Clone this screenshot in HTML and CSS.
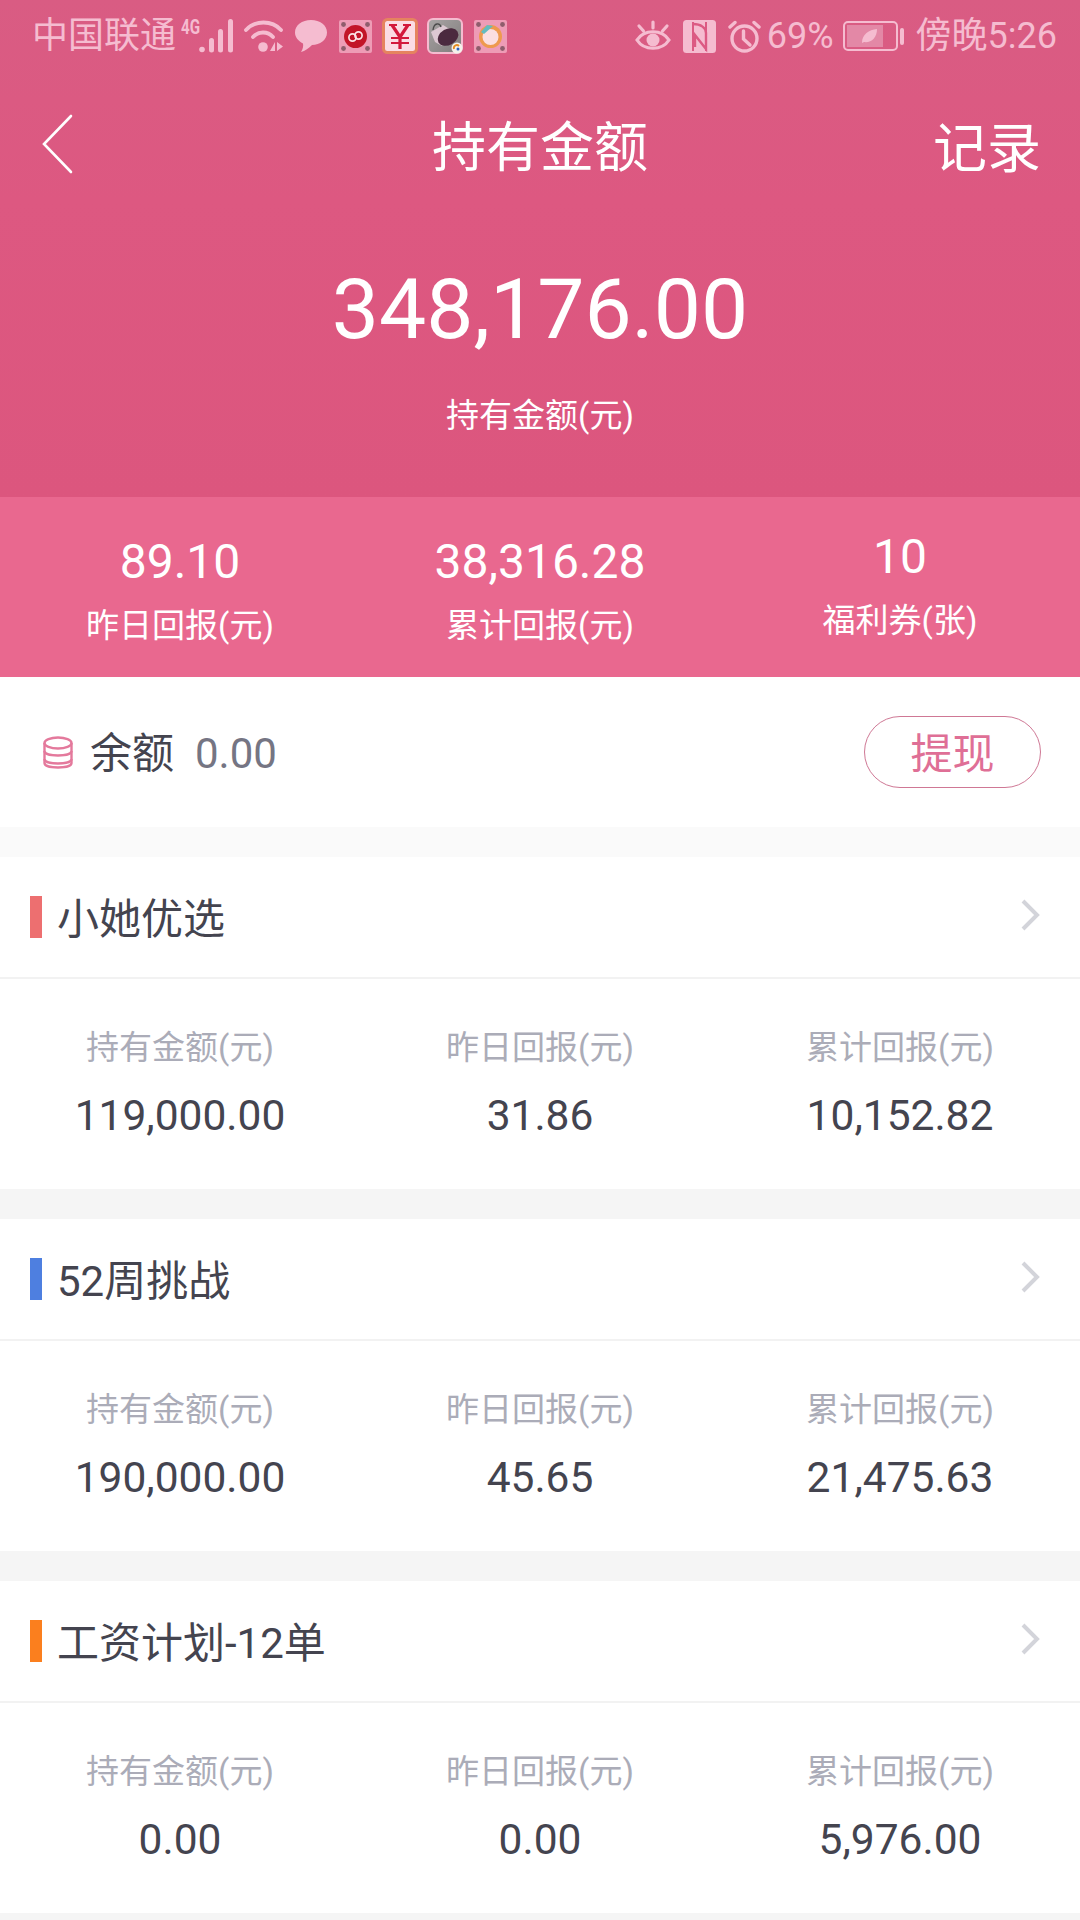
FILE: index.html
```html
<!DOCTYPE html>
<html lang="zh-CN">
<head>
<meta charset="utf-8">
<title>持有金额</title>
<link rel="stylesheet" href="styles.css">
</head>
<body>
<div class="page">
  <header class="top">
    <div class="status">
      <div class="status-side">
        <span class="carrier">中国联通</span>
        <span class="g4">4G</span>
        <svg class="ic-signal" width="36" height="36" viewBox="18 0 36 36"><g fill="#f5bcd0"><circle cx="21" cy="31.500" r="2.800"/><rect x="28" y="20" width="5" height="14.500" rx="2.500"/><rect x="37" y="11" width="5" height="23.500" rx="2.500"/><rect x="47" y="1" width="5" height="33.500" rx="2.500"/></g></svg>
        <svg class="ic-wifi" width="39" height="34" viewBox="0 0 39 34"><g fill="none" stroke="#f5bcd0" stroke-width="3.800" stroke-linecap="round"><path d="M2 11 C11 1 28 1 37 11"/><path d="M9 18 C14 12 24 12 29 18"/></g><circle cx="19" cy="28" r="4.800" fill="#f5bcd0"/><path d="M31 23 L31 32 L26 32 Z M33 23 L39 27.500 L33 32 Z" fill="#f5bcd0"/></svg>
        <svg class="ic-bubble" width="34" height="34" viewBox="0 0 34 34"><path d="M17 1 C26 1 33 6 33 13.500 C33 21 26 26 18 26 C15 29 11 32 7 33 C9 30 9.500 27 9 24.500 C4 22 1 18 1 13.500 C1 6 8 1 17 1 Z" fill="#f5bcd0"/></svg>
        <svg class="ic-app" width="33" height="33" viewBox="0 0 33 33"><rect width="33" height="33" rx="2" fill="#ee9cb6"/><g fill="#8e5d6c"><circle cx="4.500" cy="4.500" r="2.400"/><circle cx="28.500" cy="4.500" r="2.400"/><circle cx="4.500" cy="28.500" r="2.400"/><circle cx="28.500" cy="28.500" r="2.400"/></g><circle cx="16.500" cy="16.500" r="11.500" fill="#c21528"/><circle cx="13.500" cy="17.500" r="3.600" fill="none" stroke="#fbe3e6" stroke-width="1.700"/><circle cx="19.500" cy="15.500" r="3.600" fill="none" stroke="#fbe3e6" stroke-width="1.700"/></svg>
        <svg class="ic-yen" width="36" height="36" viewBox="0 0 36 36"><rect x="1.500" y="1.500" width="33" height="33" rx="4" fill="#fbdbe4" stroke="#e5835f" stroke-width="3"/><path d="M7 7 H15 M21 7 H29" fill="none" stroke="#d3183c" stroke-width="2"/><path d="M10 7 L18 19 L26 7 M18 19 V31" fill="none" stroke="#d3183c" stroke-width="3.200"/><path d="M9 20 H27 M9 25 H27" fill="none" stroke="#d3183c" stroke-width="2"/></svg>
        <svg class="ic-game" width="36" height="36" viewBox="0 0 36 36"><defs><linearGradient id="gb" x1="0" y1="0" x2="1" y2="1"><stop offset="0" stop-color="#a9a5a5"/><stop offset="1" stop-color="#7f7b7b"/></linearGradient></defs><rect x="1" y="1" width="34" height="34" rx="5" fill="url(#gb)" stroke="#f5bcd0" stroke-width="2"/><path d="M4 14 L16 7 L24 12 L15 28 L8 24 Z" fill="#dcc8d2"/><ellipse cx="21" cy="19" rx="11" ry="8" transform="rotate(-30 21 19)" fill="#4b2a3f"/><path d="M6 12 C7 4 13 5 14 9" fill="none" stroke="#4a4a4a" stroke-width="1.300"/><circle cx="30" cy="30" r="5.500" fill="#f4f1ea"/><path d="M27 31 A3 3 0 0 1 32 28" fill="none" stroke="#e58c1f" stroke-width="1.800"/><circle cx="31" cy="31" r="1.500" fill="#2b62c0"/></svg>
        <svg class="ic-app" width="33" height="33" viewBox="0 0 33 33"><rect width="33" height="33" rx="2" fill="#ee9cb6"/><g fill="#8e5d6c"><circle cx="4.500" cy="4.500" r="2.400"/><circle cx="28.500" cy="4.500" r="2.400"/><circle cx="4.500" cy="28.500" r="2.400"/><circle cx="28.500" cy="28.500" r="2.400"/></g><circle cx="16.500" cy="16.500" r="11.500" fill="#ee9a4e"/><circle cx="16.500" cy="17" r="8" fill="#fbdfe0"/><path d="M7 12 L13 5 L19 6 L10 14 Z" fill="#63bcc0"/></svg>
      </div>
      <div class="status-side">
        <svg class="ic-eye" width="36" height="33" viewBox="0 0 36 33"><g fill="none" stroke="#f5bcd0" stroke-width="3.200" stroke-linecap="round"><path d="M2 20 C9 9 27 9 34 20 C27 31 9 31 2 20 Z"/><path d="M18 2 V8 M4 6 L8.500 11 M32 6 L27.500 11"/></g><circle cx="18" cy="20" r="6.500" fill="#f5bcd0"/></svg>
        <svg class="ic-nfc" width="33" height="33" viewBox="0 0 33 33"><rect width="33" height="33" rx="3.500" fill="#f5bcd0"/><path d="M10 2 V31 M23 2 V31" stroke="#dc5a83" stroke-width="2" fill="none"/><path d="M10 4 C18 4 23 8 23 13 V29 L12 15 V27" fill="none" stroke="#dc5a83" stroke-width="2.400"/></svg>
        <svg class="ic-alarm" width="33" height="33" viewBox="0 0 33 33"><g fill="none" stroke="#f5bcd0" stroke-width="3.400" stroke-linecap="round"><circle cx="16.500" cy="18.500" r="12.500"/><path d="M15.500 11 V19 L22 25"/><path d="M2 7 L7 2.500 M31 7 L26 2.500"/></g></svg>
        <span class="pct">69%</span>
        <svg class="ic-battery" width="61" height="30" viewBox="0 0 61 30"><rect x="1" y="1" width="53" height="28" rx="4" fill="none" stroke="#f5bcd0" stroke-width="2"/><rect x="4" y="4" width="36" height="22" fill="#e388a6"/><path d="M19 22 C19 13 26 9 34 8 C34 17 28 22 21 21 Z" fill="#f5bcd0"/><rect x="57" y="7" width="4" height="17" rx="2" fill="#f5bcd0"/></svg>
        <span class="clock">傍晚5:26</span>
      </div>
    </div>
    <nav class="nav">
      <svg class="back" width="31" height="60" viewBox="0 0 31 60"><path d="M29 2 L2 30 L29 58" fill="none" stroke="#fff" stroke-width="2.600" stroke-linecap="round"/></svg>
      <h1 class="title">持有金额</h1>
      <span class="record">记录</span>
    </nav>
    <div class="hero">
      <div class="hero-num">348,176.00</div>
      <div class="hero-label">持有金额(元)</div>
    </div>
  </header>

  <section class="stats">
    <div class="stat"><div class="stat-num">89.10</div><div class="stat-label">昨日回报(元)</div></div>
    <div class="stat"><div class="stat-num">38,316.28</div><div class="stat-label">累计回报(元)</div></div>
    <div class="stat stat-raised"><div class="stat-num">10</div><div class="stat-label">福利券(张)</div></div>
  </section>

  <section class="balance">
    <svg class="coins" width="30" height="33" viewBox="0 0 30 33"><g fill="#fff" stroke="#e4799c" stroke-width="2.400"><path d="M1.500 23 V27 C1.500 30 8 31.500 15 31.500 C22 31.500 28.500 30 28.500 27 V23"/><path d="M1.500 15 V23 C1.500 26 8 27.500 15 27.500 C22 27.500 28.500 26 28.500 23 V15"/><path d="M1.500 7 V15 C1.500 18 8 19.500 15 19.500 C22 19.500 28.500 18 28.500 15 V7"/><ellipse cx="15" cy="7" rx="13.500" ry="5.500"/></g></svg>
    <span class="balance-label">余额</span>
    <span class="balance-num">0.00</span>
    <span class="withdraw">提现</span>
  </section>

  <section class="card card-first">
    <div class="card-head"><i class="mark mark-red"></i><span class="card-title">小她优选</span><svg class="chev" width="20" height="34" viewBox="0 0 20 34"><path d="M3 3 L17 17 L3 31" fill="none" stroke="#d3d4da" stroke-width="4"/></svg></div>
    <div class="card-body">
      <div class="cell"><div class="cell-label">持有金额(元)</div><div class="cell-num">119,000.00</div></div>
      <div class="cell"><div class="cell-label">昨日回报(元)</div><div class="cell-num">31.86</div></div>
      <div class="cell"><div class="cell-label">累计回报(元)</div><div class="cell-num">10,152.82</div></div>
    </div>
  </section>

  <section class="card">
    <div class="card-head"><i class="mark mark-blue"></i><span class="card-title">52周挑战</span><svg class="chev" width="20" height="34" viewBox="0 0 20 34"><path d="M3 3 L17 17 L3 31" fill="none" stroke="#d3d4da" stroke-width="4"/></svg></div>
    <div class="card-body">
      <div class="cell"><div class="cell-label">持有金额(元)</div><div class="cell-num">190,000.00</div></div>
      <div class="cell"><div class="cell-label">昨日回报(元)</div><div class="cell-num">45.65</div></div>
      <div class="cell"><div class="cell-label">累计回报(元)</div><div class="cell-num">21,475.63</div></div>
    </div>
  </section>

  <section class="card">
    <div class="card-head"><i class="mark mark-orange"></i><span class="card-title">工资计划-12单</span><svg class="chev" width="20" height="34" viewBox="0 0 20 34"><path d="M3 3 L17 17 L3 31" fill="none" stroke="#d3d4da" stroke-width="4"/></svg></div>
    <div class="card-body">
      <div class="cell"><div class="cell-label">持有金额(元)</div><div class="cell-num">0.00</div></div>
      <div class="cell"><div class="cell-label">昨日回报(元)</div><div class="cell-num">0.00</div></div>
      <div class="cell"><div class="cell-label">累计回报(元)</div><div class="cell-num">5,976.00</div></div>
    </div>
  </section>
</div>
</body>
</html>
```

FILE: styles.css
```css
* { box-sizing: border-box; margin: 0; padding: 0; }
html, body { height: 1920px; overflow: hidden; }
body { background: #f5f5f5; font-family: Roboto, "Noto Sans CJK SC", sans-serif; color: #44444f; }
.page { width: 1080px; height: 1920px; overflow: hidden; }

.top { height: 497px; background: linear-gradient(180deg, #d95c83 0, #dd5881 200px, #dc567e 100%); color: #fff; }

.status { height: 68px; padding: 0 23px 0 32px; display: flex; justify-content: space-between; align-items: center; color: #f5bcd0; }
.status-side { display: flex; align-items: center; height: 36px; margin-top: 4px; }
.carrier { font-size: 36px; line-height: 36px; white-space: nowrap; }
.g4 { width: 18px; margin-left: 5px; align-self: flex-start; font-size: 20px; font-weight: 700; line-height: 18px; transform: scaleX(0.76); transform-origin: left center; white-space: nowrap; }
.ic-wifi { margin-left: 9px; }
.ic-bubble { margin-left: 11px; }
.status-side .ic-app { margin-left: 11px; }
.ic-yen { margin-left: 10px; }
.ic-game { margin-left: 9px; }
.ic-game + .ic-app { margin-left: 11px; }
.ic-nfc { margin-left: 12px; }
.ic-alarm { margin-left: 12px; }
.pct { font-size: 36px; line-height: 36px; margin-left: 6px; }
.ic-battery { margin-left: 9px; }
.clock { font-size: 36px; line-height: 36px; margin-left: 12px; }

.nav { height: 154px; padding: 0 39px 0 42px; display: flex; align-items: center; justify-content: space-between; position: relative; }
.back { margin-top: -2px; }
.title { position: absolute; left: 0; right: 0; text-align: center; font-size: 54px; font-weight: 400; line-height: 64px; padding-top: 8px; }
.record { font-size: 54px; line-height: 64px; padding-top: 10px; }

.hero { text-align: center; }
.hero-num { font-size: 84px; line-height: 100px; padding-top: 38px; }
.hero-label { font-size: 33px; line-height: 44px; margin-top: 34px; }

.stats { height: 180px; background: #e9688f; color: #fff; display: grid; grid-template-columns: repeat(3, 1fr); text-align: center; }
.stat { padding-top: 35px; }
.stat-raised { padding-top: 30px; }
.stat-num { font-size: 48px; line-height: 60px; }
.stat-label { font-size: 33px; line-height: 44px; margin-top: 12px; }

.balance { height: 150px; background: #fff; display: flex; align-items: center; padding: 0 39px 0 43px; }
.coins { margin-right: 17px; }
.balance-label { font-size: 42px; line-height: 50px; color: #44444f; margin-top: 4px; }
.balance-num { font-size: 42px; line-height: 50px; color: #757583; margin-left: 21px; margin-top: 4px; }
.withdraw { margin-left: auto; width: 177px; height: 72px; border: 1.500px solid #cf7895; border-radius: 36px; color: #df6f96; font-size: 42px; line-height: 75px; text-align: center; }

.card { background: #fff; height: 332px; margin-top: 30px; }
.card-first { box-shadow: 0 -30px 0 #fafafa; }
.card-head { height: 122px; border-bottom: 2px solid #f2f2f2; display: flex; align-items: center; padding: 0 40px 0 30px; }
.mark { width: 12px; height: 42px; margin-right: 15px; }
.mark-red { background: #ed6f70; }
.mark-blue { background: #4e7fe0; }
.mark-orange { background: #fb7f1e; }
.card-title { font-size: 42px; line-height: 50px; color: #44444f; padding-top: 6px; }
.chev { margin-left: auto; margin-top: -4px; }
.card-body { display: grid; grid-template-columns: repeat(3, 1fr); text-align: center; padding-top: 47px; }
.cell-label { font-size: 33px; line-height: 44px; color: #abacb8; }
.cell-num { font-size: 42.500px; line-height: 50px; margin-top: 21px; color: #44444f; }
```
